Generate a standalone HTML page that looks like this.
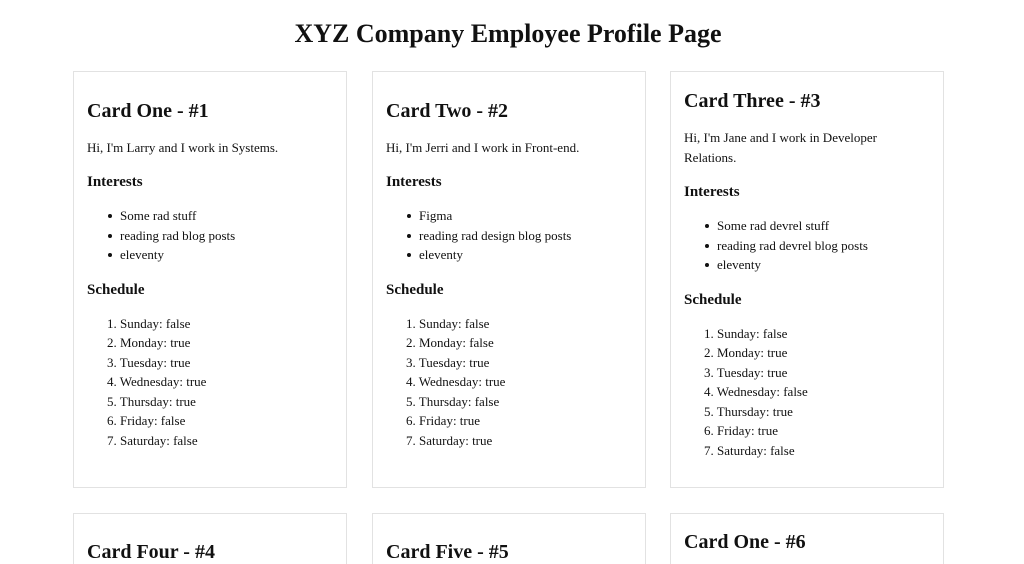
<!DOCTYPE html>
<html style="height:564px;overflow:hidden"><head><meta charset="utf-8"><style>
html,body{height:564px;overflow:hidden}
body{margin:0;width:1024px;background:#fff;font-family:"Liberation Serif",serif;color:#111;position:relative}
.t{position:absolute;left:0;width:1016px;text-align:center;top:16px;font-size:26px;font-weight:bold;line-height:36px}
.c{position:absolute;width:272px;height:415px;border:1px solid #e2e2e2}
.c div{position:absolute;left:13px;line-height:20px;font-size:13px;white-space:nowrap}
.c .h2{font-size:20px;font-weight:bold;line-height:24px}
.c .h3{font-size:15px;font-weight:bold}
.c .li{left:46px}
.c .li:before{content:"";position:absolute;left:-12px;top:8px;width:4px;height:4px;border-radius:50%;background:#111}
.c .ol{left:33px}
</style></head><body>
<div class="t">XYZ Company Employee Profile Page</div>

<div class="c" style="left:73px;top:71px">
<div class="h2" style="top:27px">Card One - #1</div>
<div style="top:66px">Hi, I'm Larry and I work in Systems.</div>
<div class="h3" style="top:100px">Interests</div>
<div class="li" style="top:134px">Some rad stuff</div>
<div class="li" style="top:154px">reading rad blog posts</div>
<div class="li" style="top:173px">eleventy</div>
<div class="h3" style="top:208px">Schedule</div>
<div class="ol" style="top:242px">1. Sunday: false</div>
<div class="ol" style="top:261px">2. Monday: true</div>
<div class="ol" style="top:281px">3. Tuesday: true</div>
<div class="ol" style="top:300px">4. Wednesday: true</div>
<div class="ol" style="top:320px">5. Thursday: true</div>
<div class="ol" style="top:339px">6. Friday: false</div>
<div class="ol" style="top:359px">7. Saturday: false</div>
</div>

<div class="c" style="left:372px;top:71px">
<div class="h2" style="top:27px">Card Two - #2</div>
<div style="top:66px">Hi, I'm Jerri and I work in Front-end.</div>
<div class="h3" style="top:100px">Interests</div>
<div class="li" style="top:134px">Figma</div>
<div class="li" style="top:154px">reading rad design blog posts</div>
<div class="li" style="top:173px">eleventy</div>
<div class="h3" style="top:208px">Schedule</div>
<div class="ol" style="top:242px">1. Sunday: false</div>
<div class="ol" style="top:261px">2. Monday: false</div>
<div class="ol" style="top:281px">3. Tuesday: true</div>
<div class="ol" style="top:300px">4. Wednesday: true</div>
<div class="ol" style="top:320px">5. Thursday: false</div>
<div class="ol" style="top:339px">6. Friday: true</div>
<div class="ol" style="top:359px">7. Saturday: true</div>
</div>

<div class="c" style="left:670px;top:71px">
<div class="h2" style="top:17px">Card Three - #3</div>
<div style="top:56px">Hi, I'm Jane and I work in Developer</div>
<div style="top:76px">Relations.</div>
<div class="h3" style="top:110px">Interests</div>
<div class="li" style="top:144px">Some rad devrel stuff</div>
<div class="li" style="top:164px">reading rad devrel blog posts</div>
<div class="li" style="top:183px">eleventy</div>
<div class="h3" style="top:218px">Schedule</div>
<div class="ol" style="top:252px">1. Sunday: false</div>
<div class="ol" style="top:271px">2. Monday: true</div>
<div class="ol" style="top:291px">3. Tuesday: true</div>
<div class="ol" style="top:310px">4. Wednesday: false</div>
<div class="ol" style="top:330px">5. Thursday: true</div>
<div class="ol" style="top:349px">6. Friday: true</div>
<div class="ol" style="top:369px">7. Saturday: false</div>
</div>

<div class="c" style="left:73px;top:513px;height:60px;border-bottom:none">
<div class="h2" style="top:26px">Card Four - #4</div>
</div>
<div class="c" style="left:372px;top:513px;height:60px;border-bottom:none">
<div class="h2" style="top:26px">Card Five - #5</div>
</div>
<div class="c" style="left:670px;top:513px;height:60px;border-bottom:none">
<div class="h2" style="top:16px">Card One - #6</div>
</div>
</body></html>
